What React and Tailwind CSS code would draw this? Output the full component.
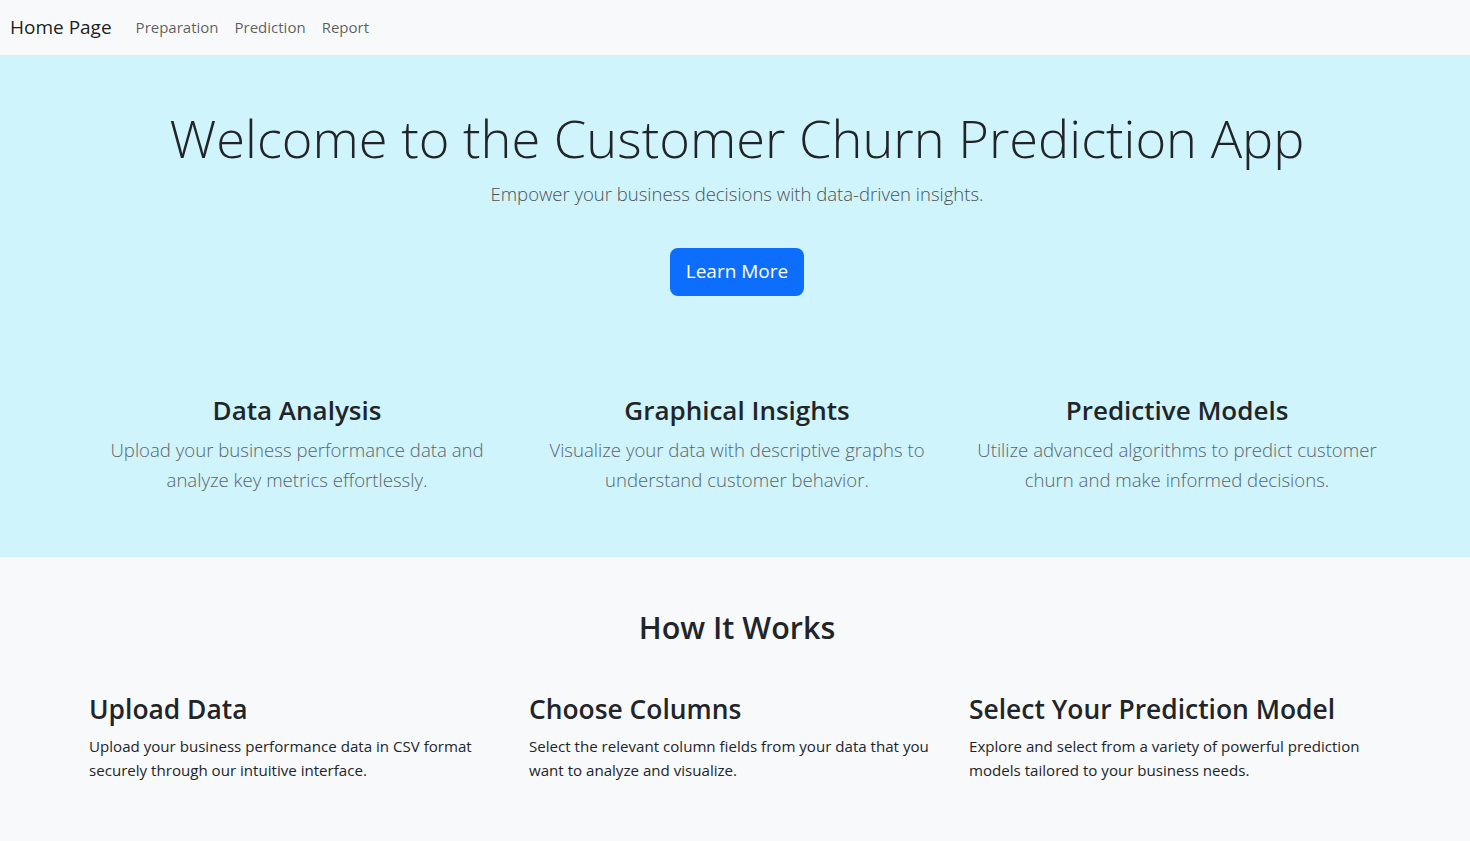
import React from "react";

const font = { fontFamily: '"Open Sans", "Noto Sans", sans-serif' };

export default function App() {
  const features = [
    ["Data Analysis", "Upload your business performance data and analyze key metrics effortlessly."],
    ["Graphical Insights", "Visualize your data with descriptive graphs to understand customer behavior."],
    ["Predictive Models", "Utilize advanced algorithms to predict customer churn and make informed decisions."],
  ];
  const steps = [
    ["Upload Data", "Upload your business performance data in CSV format securely through our intuitive interface."],
    ["Choose Columns", "Select the relevant column fields from your data that you want to analyze and visualize."],
    ["Select Your Prediction Model", "Explore and select from a variety of powerful prediction models tailored to your business needs."],
  ];
  return (
    <div className="min-h-[841px] bg-[#f8f9fa] text-[#212529]" style={font}>
      <nav className="h-[55px] bg-[#f8f9fa] flex items-center pl-[10px]">
        <span className="text-[19px] text-[#000000e6] mr-[16px]">Home Page</span>
        <div className="flex items-center">
          {["Preparation", "Prediction", "Report"].map((l) => (
            <a key={l} className="px-[8px] text-[15px] text-[#000000a6]">{l}</a>
          ))}
        </div>
      </nav>
      <section className="bg-[#cff4fc] pt-[52px] pb-[62px] pl-[4px]">
        <div className="text-center">
          <h1 className="text-[52.4px] font-light leading-[1.2]">Welcome to the Customer Churn Prediction App</h1>
          <p className="mt-[10px] text-[18.5px] font-light leading-[1.5] text-[#4d5154]">Empower your business decisions with data-driven insights.</p>
          <button className="mt-[40px] h-[48px] w-[134px] rounded-[8px] bg-[#0d6efd] text-white text-[19px]">Learn More</button>
        </div>
        <div className="mx-auto max-w-[1320px] grid grid-cols-3 mt-[99px]">
          {features.map(([t, d]) => (
            <div key={t} className="px-[12px] text-center">
              <h3 className="text-[26px] font-semibold leading-[1.2] mb-[9px]">{t}</h3>
              <p className="text-[18.6px] font-light leading-[30px] text-[#5c636a]">{d}</p>
            </div>
          ))}
        </div>
      </section>
      <section className="pt-[52px] pb-[40px] pl-[4px]">
        <h2 className="text-center text-[30.5px] font-semibold leading-[1.2]">How It Works</h2>
        <div className="mx-auto max-w-[1320px] grid grid-cols-3 mt-[49px]">
          {steps.map(([t, d]) => (
            <div key={t} className="pl-[12px] pr-[10px]">
              <h3 className="text-[26.4px] font-semibold leading-[1.2] mb-[8px]">{t}</h3>
              <p className="text-[15.1px] leading-[24px] pr-[8px]">{d}</p>
            </div>
          ))}
        </div>
      </section>
    </div>
  );
}
